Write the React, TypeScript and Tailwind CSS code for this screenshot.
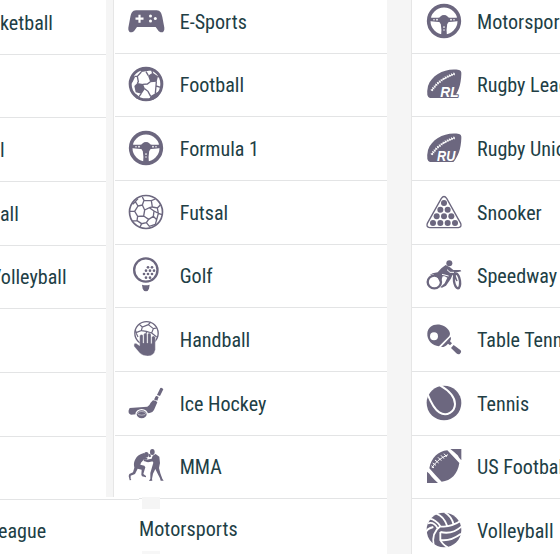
import type { ReactNode } from 'react';

const ink = '#6c677f';

const Icon = ({ children }: { children: ReactNode }) => (
    <svg viewBox="0 0 108 108" className="w-9 h-9 shrink-0 overflow-visible" fill={ink}>
        {children}
    </svg>
);

const Gamepad = () => (
    <Icon>
        <path d="M24 22H86C97 22 101 32 103 42L109 74C111 90 97 92 90 82L83 72H27L20 82C13 92 -1 90 1 74L7 42C9 32 13 22 24 22Z" />
        <path d="M34.500 35V59M22.500 47H46.500" stroke="#fff" strokeWidth="6.500" />
        <g fill="#fff">
            <circle cx="67.500" cy="39" r="4.500" />
            <circle cx="82" cy="46.500" r="4.500" />
            <circle cx="67.500" cy="54" r="4.500" />
        </g>
    </Icon>
);

const Football = () => (
    <Icon>
        <circle cx="54" cy="54" r="47.500" fill="#fff" stroke={ink} strokeWidth="9" />
        <path d="M60 29L74 20L90 31L86 47L67 49ZM19 60L28 51L45 54L51 68L41 83L23 79ZM34 8L46 5H64L71 13L54 16L40 18ZM5 42L16 26L21 33L14 48L7 56ZM62 104L68 90L82 82L96 75L90 92L76 101ZM13 81L24 84L33 92L44 103L26 98Z" />
        <path d="M40 18L28 31L31 47L28 52M28 31L20 31M54 17L61 29M67 47L58 54L44 55M85 46L84 60L98 64M50 68L60 76L68 91M84 60L82 83M33 92L40 82M74 21L71 13M89 31L98 34" fill="none" stroke={ink} strokeWidth="4" />
    </Icon>
);

const Wheel = () => (
    <Icon>
        <circle cx="54" cy="54" r="46" fill="none" stroke={ink} strokeWidth="11" />
        <circle cx="54" cy="51" r="15" />
        <path d="M8 43Q30 46 44 43L48 58Q30 56 8 54ZM100 43Q78 46 64 43L60 58Q78 56 100 54ZM44 60H64Q60 80 63 102H45Q48 80 44 60Z" />
        <g fill="#fff">
            <circle cx="24" cy="50" r="2.300" />
            <circle cx="33" cy="50" r="2.600" />
            <circle cx="75" cy="50" r="2.600" />
            <circle cx="84" cy="50" r="2.300" />
            <circle cx="54" cy="72" r="2.600" />
            <circle cx="54" cy="81" r="2.300" />
        </g>
    </Icon>
);

const Futsal = () => (
    <Icon>
        <circle cx="54" cy="54" r="49.500" fill="none" stroke={ink} strokeWidth="5" />
        <path d="M50 48L64 41L78 51L76 67L62 76L47 66ZM30 36L43 33L50 48L47 66L29 67L20 52ZM43 33L48 19L70 20L73 39L64 41M29 67L27 80L41 89L55 86L62 76M20 52L6 52M30 36L22 23L30 14M48 19L43 9M70 20L82 15M73 39L88 42L97 33M88 42L91 58L78 51M91 58L102 62M76 67L86 77L91 58M86 77L82 91M55 86L64 97L82 91M41 89L36 99M27 80L13 81M22 23L14 31" fill="none" stroke={ink} strokeWidth="4" />
    </Icon>
);

const golfDots = [[60, 31], [72, 31], [54, 41], [66, 41], [78, 41], [48, 51], [60, 51], [72, 51], [54, 62], [66, 62]];

const Golf = () => (
    <Icon>
        <circle cx="53.500" cy="39" r="35" fill="none" stroke={ink} strokeWidth="7" />
        {golfDots.map(([x, y]) => <circle key={`${x}-${y}`} cx={x} cy={y} r="4" />)}
        <path d="M42 83Q54 86 65 83L63 95Q60 103 54 103Q47 103 44 95Z" />
    </Icon>
);

const Handball = () => (
    <Icon>
        <circle cx="55.500" cy="37" r="35" fill="none" stroke={ink} strokeWidth="4" />
        <path d="M34 10L43 18L61 11L68 3M43 18L40 29L24 35L30 48M61 11L76 23L71 36L55 31L40 29M76 23L86 21M71 36L86 48M24 35L22 25M55 31V42" fill="none" stroke={ink} strokeWidth="3.500" />
        <path d="M35 44Q40 37 45 43V66H47V40Q52 33 57 39V66H59V39Q64 33 69 40V68H71V48Q77 42 82 48V86Q78 105 59 105Q44 105 35 96L18 76Q16 66 24 67L35 74Z" stroke="#fff" strokeWidth="1" />
    </Icon>
);

const IceHockey = () => (
    <Icon>
        <path d="M5 69L58 65Q65 61 68 53L75 46Q84 46 88 52L78 75Q74 83 65 84L9 89Q0 87 2 76Z" />
        <path d="M79 43L84 33L92 36L88 47ZM87 30L97 9Q102 7 106 13L96 33Z" />
        <path d="M81 45L87 34" stroke={ink} strokeWidth="5" />
        <ellipse cx="41" cy="88" rx="17" ry="14" stroke="#fff" strokeWidth="4" />
        <ellipse cx="41" cy="85" rx="12" ry="5.500" fill="none" stroke="#fff" strokeWidth="1.500" />
    </Icon>
);

const Mma = () => (
    <Icon>
        <ellipse cx="55" cy="20" rx="7" ry="8" />
        <path d="M22 34Q29 19 48 15L52 27L59 30L55 36L49 33L39 44L37 50L49 53L52 58L46 78L54 84V88L42 85L40 80L41 65L29 62L21 78L8 83V92L10 96L5 97L2 84L4 78L15 73L19 59Q15 46 22 34Z" />
        <path d="M48 33L59 37L75 33L76 40L60 43L47 39ZM61 19L67 18L69 26L63 28Z" />
        <ellipse cx="73" cy="12" rx="7" ry="9" />
        <path d="M74 23L83 18L94 26L96 45L93 60L97 76L103 92L107 98H98L96 91L89 77L82 63L75 77L72 92L73 98L63 99L67 92L67 75L72 58L76 44L73 38L56 41L55 35L71 32Z" />
    </Icon>
);

const Rugby = ({ mark }: { mark: string }) => {
    const x = mark === 'RL' ? 43 : 33;
    return (
        <Icon>
            <path d="M6 60C18 25 60 5 99 12Q107 14 106 24C105 58 96 80 82 96H12Q-1 93 6 60Z" />
            <path d="M17 74Q38 40 86 23" fill="none" stroke="#fff" strokeWidth="3" />
            <path d="M17 74Q38 40 86 23" fill="none" stroke="#fff" strokeWidth="8" strokeDasharray="3 4" />
            <text
                x={x}
                y="93"
                fill="#fff"
                stroke={ink}
                strokeWidth="6"
                strokeLinejoin="round"
                paintOrder="stroke"
                textLength="55"
                lengthAdjust="spacingAndGlyphs"
                className="font-['Liberation_Sans',sans-serif] font-bold italic text-[42px] [font-stretch:100%]"
            >
                {mark}
            </text>
        </Icon>
    );
};

const snookerBalls = [[54, 27], [43, 47], [65, 47], [32, 67], [54, 67], [76, 67], [21, 87], [43, 87], [65, 87], [87, 87]];

const Snooker = () => (
    <Icon>
        <path d="M46 13Q54 2 62 13L104 88Q108 100 97 101H11Q0 100 4 88Z" fill="none" stroke={ink} strokeWidth="4" />
        {snookerBalls.map(([x, y]) => <circle key={`${x}-${y}`} cx={x} cy={y} r="9" />)}
    </Icon>
);

const Speedway = () => (
    <Icon>
        <ellipse cx="25" cy="75" rx="20" ry="19" fill="none" stroke={ink} strokeWidth="7" />
        <ellipse cx="93" cy="72" rx="9" ry="22" transform="rotate(-8 93 72)" fill="none" stroke={ink} strokeWidth="7" />
        <circle cx="70" cy="19" r="9" />
        <path d="M59 24L72 31L82 39L103 39L106 43L93 46L86 48L95 72L91 73L80 53L74 66L60 86L48 92L43 91L56 79L64 62L56 58L50 58L45 73L41 74L35 62L22 52L10 55L20 49L35 46L46 34Z" />
        <path d="M63 38L72 46L84 46M48 52L68 57" fill="none" stroke="#fff" strokeWidth="3" />
    </Icon>
);

const TableTennis = () => (
    <Icon>
        <path d="M39 76C19 75 2 57 4 37C6 11 35 4 55 16C68 24 76 37 70 45Z" />
        <circle cx="24" cy="46" r="12" fill="#fff" />
        <path d="M74 47Q77 54 72 61L78 67L72 73L66 68Q57 79 45 78Z" />
        <path d="M83 72L104 88Q108 94 102 98Q97 102 91 97L75 81Z" />
    </Icon>
);

const Tennis = () => (
    <Icon>
        <circle cx="54" cy="54" r="52" />
        <path d="M5 28Q22 71 40 82C62 96 87 80 87 57Q87 27 42 1" fill="none" stroke="#fff" strokeWidth="6" />
    </Icon>
);

const UsFootball = () => (
    <Icon>
        <path d="M73 3H106V37Q100 32 95 22Q85 12 73 3ZM3 71Q9 74 17 86Q25 95 36 105H3ZM10 61C16 28 37 10 64 7Q82 26 100 45C95 79 75 98 47 101Q29 83 10 61Z" />
        <path d="M18 60Q29 37 66 20M20 45L30 52M27 36L38 45M36 28L46 38M45 22L54 32M54 17L62 27M16 53L24 60" fill="none" stroke="#fff" strokeWidth="3" />
    </Icon>
);

const Volleyball = () => (
    <Icon>
        <circle cx="54" cy="54" r="52" />
        <path d="M11 20Q29 22 43 43Q72 48 107 25M43 43Q16 62 23 101M5 34Q24 28 35 49M-1 63Q2 50 22 45M31 5Q54 13 64 43M56 1Q78 14 83 39M43 60Q78 69 107 43M43 60V84Q72 89 105 65M43 84Q48 96 65 106" fill="none" stroke="#fff" strokeWidth="5.500" />
    </Icon>
);

type Sport = { name: string; icon: ReactNode };

const middle: Sport[] = [
    { name: 'E-Sports', icon: <Gamepad /> },
    { name: 'Football', icon: <Football /> },
    { name: 'Formula 1', icon: <Wheel /> },
    { name: 'Futsal', icon: <Futsal /> },
    { name: 'Golf', icon: <Golf /> },
    { name: 'Handball', icon: <Handball /> },
    { name: 'Ice Hockey', icon: <IceHockey /> },
    { name: 'MMA', icon: <Mma /> },
];

const right: Sport[] = [
    { name: 'Motorsports', icon: <Wheel /> },
    { name: 'Rugby League', icon: <Rugby mark="RL" /> },
    { name: 'Rugby Union', icon: <Rugby mark="RU" /> },
    { name: 'Snooker', icon: <Snooker /> },
    { name: 'Speedway', icon: <Speedway /> },
    { name: 'Table Tennis', icon: <TableTennis /> },
    { name: 'Tennis', icon: <Tennis /> },
    { name: 'US Football', icon: <UsFootball /> },
    { name: 'Volleyball', icon: <Volleyball /> },
];

// only the tail of each name is visible in the cut-off column
const left = ['ketball', '', 'l', 'all', 'Volleyball', '', '', ''];

const SportRow = ({ name, icon }: Sport) => (
    <div className="flex items-center h-[63.66px] shrink-0 border-b border-[#e3e4e5] pl-[13.5px]">
        <div className="-mt-px">{icon}</div>
        <span className="ml-[15.5px] mt-px">{name}</span>
    </div>
);

export default function App() {
    return (
        <div className="flex w-[560px] h-[560px] overflow-hidden bg-white text-[#213e45] text-[20.1px] leading-6 whitespace-nowrap font-['Roboto_Condensed','Roboto',sans-serif] [font-stretch:75%]">
            <div className="flex flex-col w-[387px] shrink-0">
                <div className="flex h-[497px] overflow-hidden">
                    <div className="w-[106px] -mt-[9px] shrink-0">
                        {left.map((name, i) => (
                            <div key={i} className="flex items-center h-[63.66px] border-b border-[#e3e4e5]">
                                <span className={name === 'Volleyball' ? '-ml-[10px] mt-px' : 'mt-px'}>{name}</span>
                            </div>
                        ))}
                    </div>
                    <div className="w-2 shrink-0 bg-[#f5f5f5] border-r border-[#e6e6e6]" />
                    <div className="flex flex-col w-[273px] -mt-[10px] pl-[0.7px]">
                        {middle.map((sport) => <SportRow key={sport.name} {...sport} />)}
                    </div>
                </div>
                <div className="flex h-[57px]">
                    <div className="flex items-center w-[139px] mt-[2px] border-t border-[#e3e4e5] pt-[8px]">
                        <span className="-ml-[2px]">eague</span>
                    </div>
                    <div className="relative flex items-center w-[248px] mt-px border-t border-[#e3e4e5] pt-[5px]">
                        <span className="tracking-[0.05px]">Motorsports</span>
                        <div className="absolute left-[3px] -top-[2px] w-[18px] h-3 bg-[#f5f5f5]" />
                        <div className="absolute left-[3px] bottom-0 w-[18px] h-[3px] bg-[#f7f7f7]" />
                    </div>
                </div>
            </div>
            <div className="w-[25px] h-[554px] shrink-0 bg-[#f5f5f5] border-r border-[#e6e6e6]" />
            <div className="flex flex-col flex-1 min-w-0 h-[564px] overflow-hidden -mt-[10px]">
                {right.map((sport) => <SportRow key={sport.name} {...sport} />)}
            </div>
        </div>
    );
}
